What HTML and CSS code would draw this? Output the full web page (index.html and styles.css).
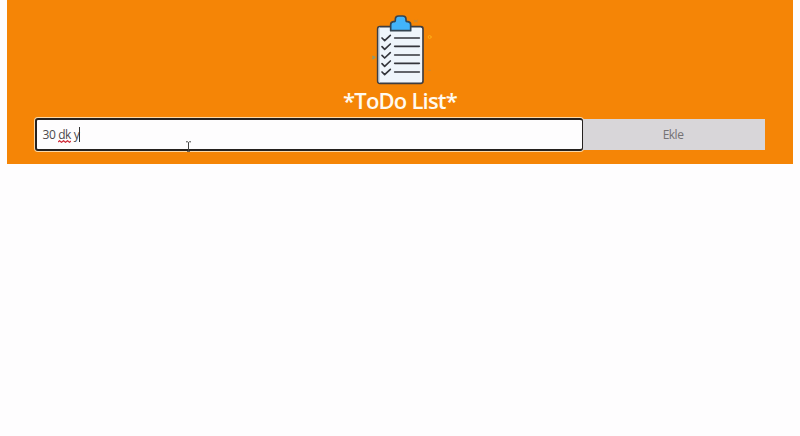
FILE: index.html
```html
<!DOCTYPE html>
<html lang="tr">
<head>
<meta charset="utf-8">
<title>ToDo List</title>
<link rel="stylesheet" href="styles.css">
</head>
<body>
<header class="header">
  <svg class="logo" viewBox="0 0 240 246" fill="none" stroke-linecap="round" stroke-linejoin="round">
    <rect x="53" y="56" width="136" height="170" rx="7" fill="#eff5fb" stroke="#3d3d42" stroke-width="5"/>
    <path d="M58 60V222" stroke="#c9d9e8" stroke-width="4"/>
    <path d="M92 68V50q0-8 8-9h3q3 0 3-4v-3q0-10 10-10h12q10 0 10 10v3q0 4 3 4h3q8 1 8 9v18Z" fill="#42b4fa" stroke="#344451" stroke-width="5"/>
    <g stroke="#34353b" stroke-width="5">
      <path d="M66 90l8 8 17-16M66 116l8 8 17-16M66 142l8 8 17-16M66 167l8 8 17-16M66 192l8 8 17-16"/>
      <path d="M104 90H178M104 115H178M104 141H178M104 166H178M104 192H178"/>
    </g>
    <circle cx="209" cy="87" r="4.5" stroke="#ffac16" stroke-width="3"/>
    <path d="M38 145l7 3-7 4" stroke="#8b9a72" stroke-width="4"/>
    <path d="M163 37l9 5M172 37l-9 5M206 187h5" stroke="#c18a3c" stroke-width="3"/>
  </svg>
  <h1 class="title">*ToDo List*</h1>
  <form class="form">
    <div class="field"><span>30 <span class="misspelled">dk<svg class="squiggle" viewBox="0 0 13 3"><path d="M0 2L1.5.7 3.5 2.3 5.5.7 7.5 2.3 9.5.7 11.5 2.3 13 1"/></svg></span> y</span><i class="caret"></i></div>
    <button class="add" type="button">Ekle</button>
  </form>
</header>
<svg class="cursor" viewBox="0 0 7 11"><path d="M1 .8h1.7l.8.7.8-.7H6M3.5 1.5V10M2 10.3h3"/></svg>
</body>
</html>
```
FILE: styles.css
```css
body {
  margin: 0 7px;
  background: #fefdfe;
  font-family: "Open Sans", "Noto Sans", sans-serif;
}
.header {
  box-sizing: border-box;
  height: 164px;
  padding: 8px 28px 0;
  background: #f58506;
  display: flex;
  flex-direction: column;
  align-items: center;
}
.logo {
  width: 80px;
  height: 82px;
  flex: none;
}
.title {
  margin: -4px 0 0;
  height: 32px;
  line-height: 28px;
  font-size: 22px;
  font-weight: 600;
  letter-spacing: -0.8px;
  color: #fffaf0;
  white-space: nowrap;
}
.form {
  display: flex;
  width: 730px;
  height: 33px;
  align-items: center;
}
.field {
  box-sizing: border-box;
  width: 548px;
  height: 33px;
  padding: 0 6px 0 5.5px;
  display: flex;
  align-items: center;
  background: #fefdfe;
  border: 2px solid #25211f;
  border-right-width: 1px;
  border-radius: 3px;
  box-shadow: 0 0 0 1px #fbd9a8;
  font-size: 12px;
  letter-spacing: -0.4px;
  line-height: 17px;
  color: #4c4a4d;
  white-space: nowrap;
}
.misspelled {
  position: relative;
}
.squiggle {
  position: absolute;
  left: 0;
  bottom: 0;
  width: 13px;
  height: 3px;
  fill: none;
  stroke: #d02f3c;
  stroke-width: 1.2;
}
.caret {
  width: 1px;
  height: 15px;
  background: #333;
}
.add {
  width: 182px;
  height: 31px;
  padding: 0 2px 1px 0;
  border: 0;
  background: #d8d6d9;
  color: #747274;
  font: 12px "Open Sans", "Noto Sans", sans-serif;
  letter-spacing: -0.5px;
}
.cursor {
  position: absolute;
  left: 185px;
  top: 141px;
  width: 7px;
  height: 11px;
  fill: none;
  stroke: #444;
}
```
